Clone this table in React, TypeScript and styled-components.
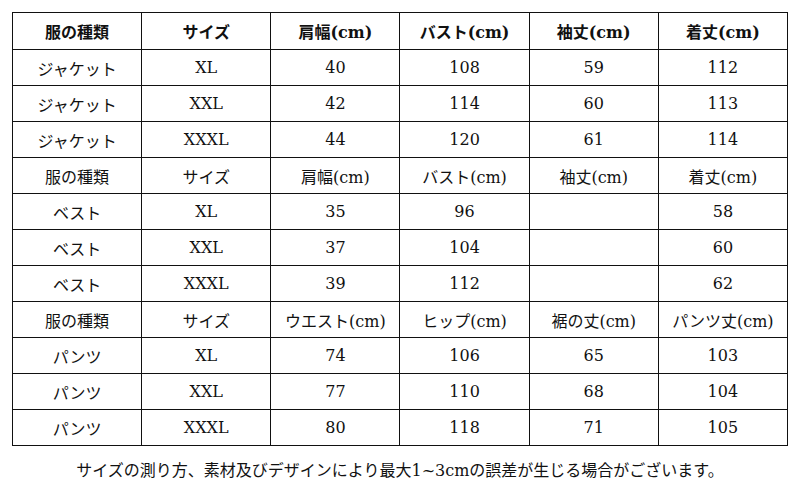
import React from 'react';
import styled, { createGlobalStyle } from 'styled-components';

const GlobalStyle = createGlobalStyle`
body {
  margin: 0;
  background: #fff;
}
`

const Page = styled.div`
  width: 800px;
  height: 489px;
  padding: 12px 12px 0 12px;
  box-sizing: border-box;
  font-family: "DejaVu Serif", "Noto Sans CJK JP", serif;
  color: #111;
`

const Table = styled.table`
  width: 776px;
  border-collapse: collapse;
  table-layout: fixed;
`

const Cell = styled.td<{ bold?: boolean }>`
  border: 1px solid #111;
  height: ${({ bold }) => (bold ? '36px' : '35px')};
  padding: 0;
  text-align: center;
  vertical-align: middle;
  font-size: 16px;
  font-weight: ${({ bold }) => (bold ? 'bold' : 'normal')};
`

const Caption = styled.p`
  margin: 11px 0 0 0;
  text-align: center;
  font-size: 16px;
  font-family: "DejaVu Serif", "Noto Sans CJK JP", serif;
`

const rows: { cells: string[]; head?: 'bold' | 'plain' }[] = [
  { cells: ['服の種類', 'サイズ', '肩幅(cm)', 'バスト(cm)', '袖丈(cm)', '着丈(cm)'], head: 'bold' },
  { cells: ['ジャケット', 'XL', '40', '108', '59', '112'] },
  { cells: ['ジャケット', 'XXL', '42', '114', '60', '113'] },
  { cells: ['ジャケット', 'XXXL', '44', '120', '61', '114'] },
  { cells: ['服の種類', 'サイズ', '肩幅(cm)', 'バスト(cm)', '袖丈(cm)', '着丈(cm)'], head: 'plain' },
  { cells: ['ベスト', 'XL', '35', '96', '', '58'] },
  { cells: ['ベスト', 'XXL', '37', '104', '', '60'] },
  { cells: ['ベスト', 'XXXL', '39', '112', '', '62'] },
  { cells: ['服の種類', 'サイズ', 'ウエスト(cm)', 'ヒップ(cm)', '裾の丈(cm)', 'パンツ丈(cm)'], head: 'plain' },
  { cells: ['パンツ', 'XL', '74', '106', '65', '103'] },
  { cells: ['パンツ', 'XXL', '77', '110', '68', '104'] },
  { cells: ['パンツ', 'XXXL', '80', '118', '71', '105'] },
];

const App = () => {
  return (
    <Page>
      <GlobalStyle />
      <Table>
        <tbody>
          {rows.map((row, i) => (
            <tr key={i}>
              {row.cells.map((c, j) => (
                <Cell key={j} bold={row.head === 'bold'}>{c}</Cell>
              ))}
            </tr>
          ))}
        </tbody>
      </Table>
      <Caption>サイズの測り方、素材及びデザインにより最大1~3cmの誤差が生じる場合がございます。</Caption>
    </Page>
  )
}

export default App;
